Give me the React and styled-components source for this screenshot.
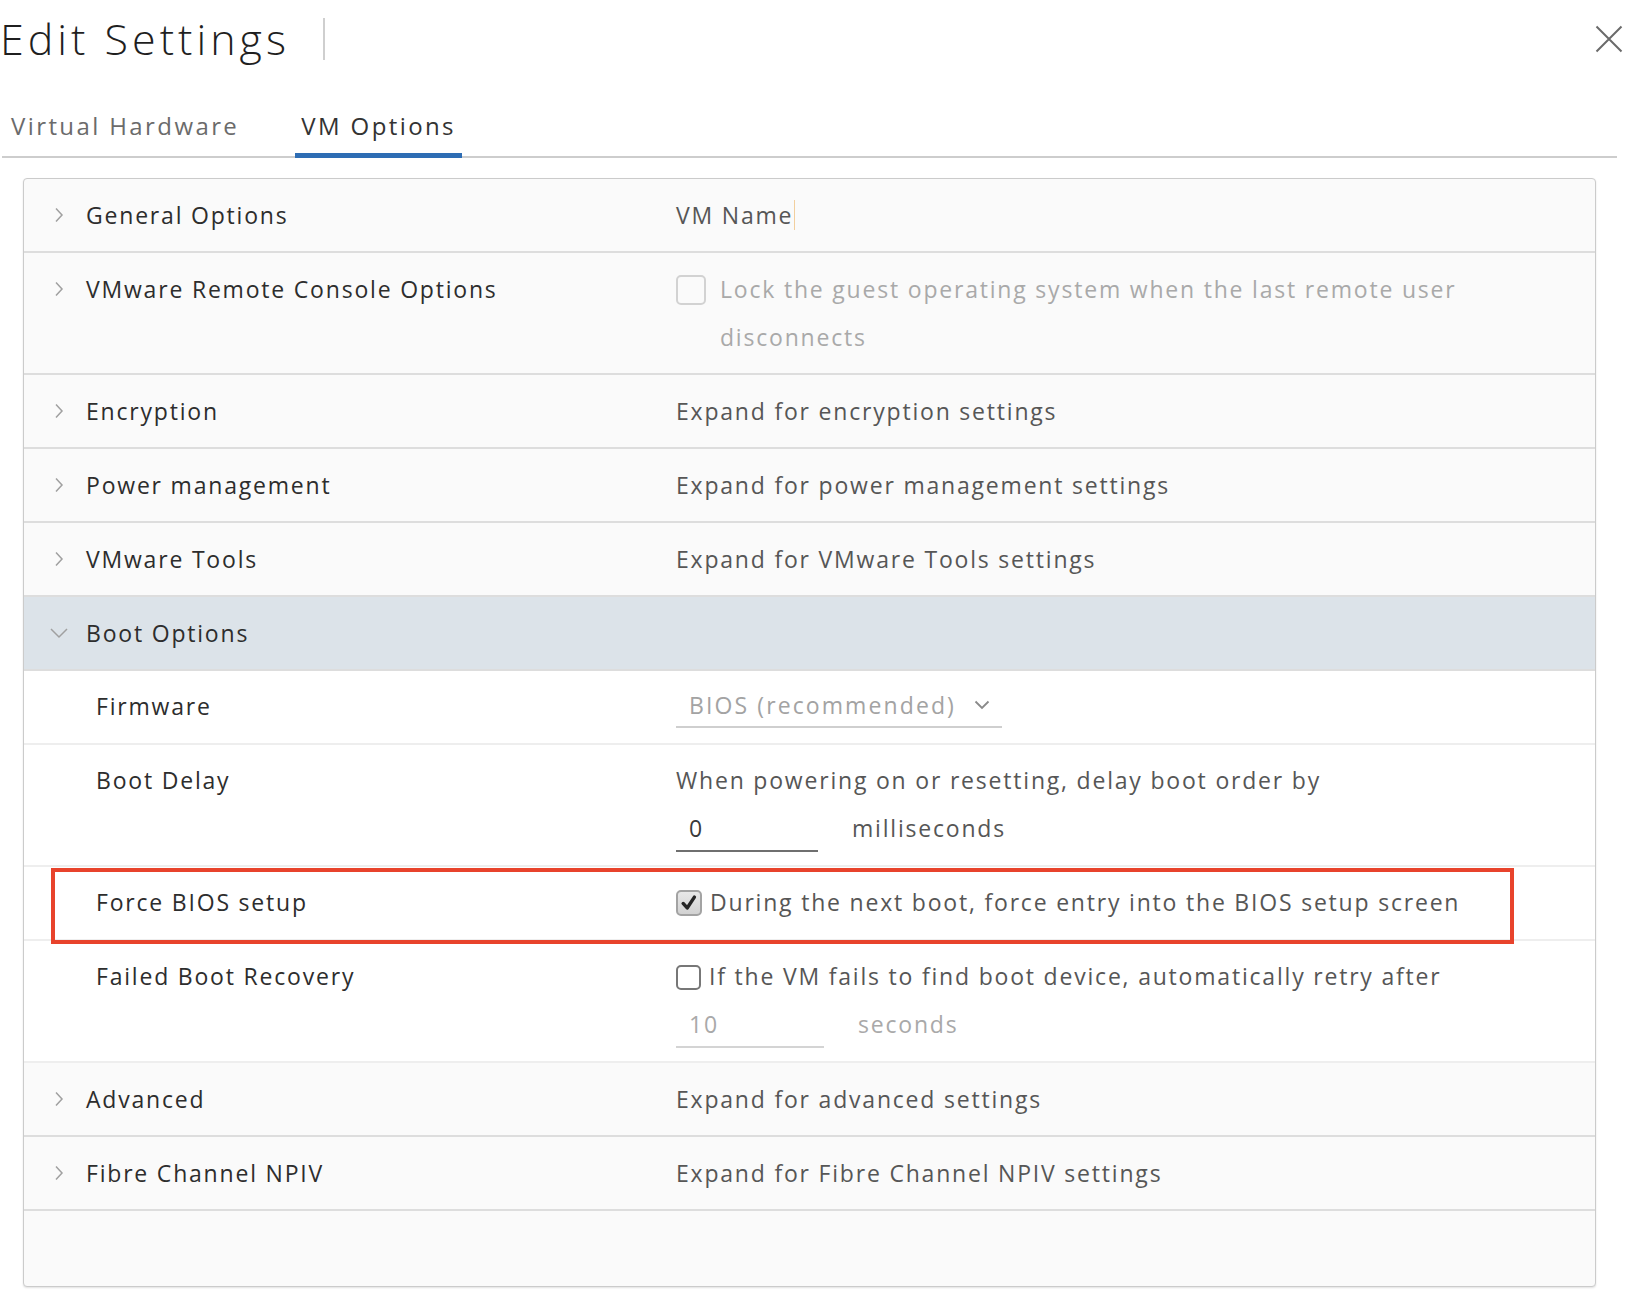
import styled, { createGlobalStyle } from 'styled-components';

const GlobalStyle = createGlobalStyle`
  html, body {
    margin: 0;
    padding: 0;
    background: #fff;
  }
  body {
    font-family: 'Open Sans', 'Liberation Sans', sans-serif;
    color: #2d2d2d;
  }
`;

function ChevronRight() {
  return (
    <Chevron viewBox="0 0 18 18">
      <polyline points="6,2.5 12,9 6,15.5" />
    </Chevron>
  );
}

function ChevronDown() {
  return (
    <Chevron viewBox="0 0 18 18">
      <polyline points="1,5 9,13 17,5" />
    </Chevron>
  );
}

function Checkbox({ checked, disabled, size }) {
  return (
    <Box $checked={checked} $disabled={disabled} $size={size}>
      {checked && (
        <svg viewBox="0 0 20 20" width="18" height="18">
          <path d="M3.5 10.5 L8 15.5 L16 3.5" fill="none" stroke="#262626" strokeWidth="3.8" strokeLinecap="round" strokeLinejoin="round" />
        </svg>
      )}
    </Box>
  );
}

function Section({ label, children }) {
  return (
    <Row>
      <LabelCell>
        <ChevronRight />
        <span>{label}</span>
      </LabelCell>
      <ValueCell>{children}</ValueCell>
    </Row>
  );
}

export default function App() {
  return (
    <>
      <GlobalStyle />
      <Dialog>
        <Header>
          <Title>Edit Settings</Title>
          <TitleDivider />
          <CloseButton aria-label="Close">
            <svg viewBox="0 0 28 28" width="28" height="28">
              <path d="M1.5 1.5 L26.5 26.5 M26.5 1.5 L1.5 26.5" stroke="#6a6a6a" strokeWidth="2" fill="none" />
            </svg>
          </CloseButton>
        </Header>

        <TabBar>
          <Tab>Virtual Hardware</Tab>
          <Tab $active>VM Options</Tab>
        </TabBar>

        <Panel>
          <Section label="General Options">
            <Value>VM Name<Caret /></Value>
          </Section>
          <Section label="VMware Remote Console Options">
            <CheckLine $gap={14}>
              <Checkbox disabled size={30} />
              <CheckText $disabled $wrap>Lock the guest operating system when the last remote user disconnects</CheckText>
            </CheckLine>
          </Section>
          <Section label="Encryption">
            <Value>Expand for encryption settings</Value>
          </Section>
          <Section label="Power management">
            <Value>Expand for power management settings</Value>
          </Section>
          <Section label="VMware Tools">
            <Value>Expand for VMware Tools settings</Value>
          </Section>

          <Row $open>
            <LabelCell>
              <ChevronDown />
              <span>Boot Options</span>
            </LabelCell>
            <ValueCell />
          </Row>

          <Row $sub>
            <LabelCell $sub>Firmware</LabelCell>
            <ValueCell>
              <SelectBox>
                BIOS (recommended)
                <SelectArrow viewBox="0 0 16 10">
                  <polyline points="1.5,1.5 8,8 14.5,1.5" />
                </SelectArrow>
              </SelectBox>
            </ValueCell>
          </Row>

          <Row $sub>
            <LabelCell $sub>Boot Delay</LabelCell>
            <ValueCell>
              <Value>When powering on or resetting, delay boot order by</Value>
              <FieldLine>
                <NumberField $width={142}>0</NumberField>
                <Unit>milliseconds</Unit>
              </FieldLine>
            </ValueCell>
          </Row>

          <Row $sub>
            <LabelCell $sub>Force BIOS setup</LabelCell>
            <ValueCell>
              <CheckLine $gap={8}>
                <Checkbox checked size={26} />
                <CheckText>During the next boot, force entry into the BIOS setup screen</CheckText>
              </CheckLine>
            </ValueCell>
            <Annotation />
          </Row>

          <Row $sub>
            <LabelCell $sub>Failed Boot Recovery</LabelCell>
            <ValueCell>
              <CheckLine $gap={8}>
                <Checkbox size={25} />
                <CheckText>If the VM fails to find boot device, automatically retry after</CheckText>
              </CheckLine>
              <FieldLine>
                <NumberField $width={148} $disabled>10</NumberField>
                <Unit $disabled>seconds</Unit>
              </FieldLine>
            </ValueCell>
          </Row>

          <Section label="Advanced">
            <Value>Expand for advanced settings</Value>
          </Section>
          <Section label="Fibre Channel NPIV">
            <Value>Expand for Fibre Channel NPIV settings</Value>
          </Section>

          <EmptyRow />
        </Panel>
      </Dialog>
    </>
  );
}

const Dialog = styled.div`
  width: 1636px;
  height: 1294px;
  overflow: hidden;
`;

const Header = styled.div`
  display: flex;
  align-items: center;
  width: 1623px;
  padding-top: 9px;
`;

const Title = styled.h1`
  margin: 0;
  font-size: 43px;
  font-weight: 300;
  letter-spacing: 4px;
  line-height: 60px;
  color: #1f1f1f;
`;

const TitleDivider = styled.div`
  width: 2px;
  height: 42px;
  margin-left: 33px;
  background: #cfcfcf;
`;

const CloseButton = styled.button`
  margin-left: auto;
  padding: 0;
  border: 0;
  background: none;
  width: 28px;
  height: 28px;
  display: flex;
`;

const TabBar = styled.div`
  display: flex;
  gap: 50px;
  width: 1615px;
  margin: 40px 0 0 2px;
  padding-left: 3px;
  box-sizing: border-box;
  border-bottom: 2px solid #cdcdcd;
`;

const Tab = styled.div`
  padding: 0 6px 10px;
  margin-bottom: -2px;
  font-size: 24px;
  letter-spacing: 2.4px;
  line-height: 34px;
  color: ${(p) => (p.$active ? '#333' : '#6b6b6b')};
  border-bottom: 5px solid ${(p) => (p.$active ? '#2e6db4' : 'transparent')};
`;

const Panel = styled.div`
  margin: 20px 0 0 23px;
  width: 1573px;
  box-sizing: border-box;
  border: 1px solid #cbcbcb;
  border-radius: 4px;
  background: #fafafa;
  box-shadow: 0 1px 2px rgba(0, 0, 0, 0.12);
  font-size: 23px;
  letter-spacing: 1.8px;
  line-height: 48px;
`;

const Row = styled.div`
  position: relative;
  display: grid;
  grid-template-columns: 652px 1fr;
  padding: ${(p) => (p.$sub ? '11px 0 13px' : '12px 0')};
  border-bottom: 2px solid ${(p) => (p.$sub ? '#eeeeee' : '#dddddd')};
  background: ${(p) => (p.$open ? '#dce3e9' : p.$sub ? '#ffffff' : 'transparent')};
`;

const EmptyRow = styled.div`
  height: 75px;
`;

const LabelCell = styled.div`
  display: flex;
  align-items: center;
  align-self: start;
  height: 48px;
  gap: 18px;
  padding-left: ${(p) => (p.$sub ? '72px' : '26px')};
  color: #2d2d2d;
`;

const Chevron = styled.svg`
  width: 18px;
  height: 18px;
  flex: none;
  fill: none;
  stroke: #a0a0a0;
  stroke-width: 1.5;
`;

const ValueCell = styled.div`
  display: flex;
  flex-direction: column;
  align-items: flex-start;
  color: #565656;
`;

const Value = styled.div`
  display: flex;
  align-items: center;
`;

const Caret = styled.span`
  display: inline-block;
  width: 1px;
  height: 30px;
  margin-left: 1px;
  background: #f2cf9e;
`;

const CheckLine = styled.div`
  display: flex;
  align-items: flex-start;
  gap: ${(p) => p.$gap}px;
`;

const Box = styled.span`
  flex: none;
  display: flex;
  align-items: center;
  justify-content: center;
  box-sizing: border-box;
  width: ${(p) => p.$size}px;
  height: ${(p) => p.$size}px;
  margin-top: ${(p) => (48 - p.$size) / 2 + 1}px;
  border-radius: 5px;
  border: 2px solid ${(p) => (p.$disabled ? '#d2d2d2' : p.$checked ? '#a3a3a3' : '#777')};
  background: ${(p) => (p.$checked ? 'linear-gradient(#e8e8e8, #d2d2d2)' : p.$disabled ? '#fafafa' : '#fff')};
`;

const CheckText = styled.span`
  color: ${(p) => (p.$disabled ? '#a9a9a9' : '#565656')};
  max-width: ${(p) => (p.$wrap ? '790px' : 'none')};
`;

const SelectBox = styled.div`
  display: flex;
  align-items: center;
  gap: 18px;
  width: 326px;
  height: 44px;
  margin: 2px 0;
  box-sizing: border-box;
  padding-left: 13px;
  border-bottom: 2px solid #cfcfcf;
  color: #a3a3a3;
  letter-spacing: 2.1px;
`;

const SelectArrow = styled.svg`
  width: 16px;
  height: 10px;
  fill: none;
  stroke: #8a8a8a;
  stroke-width: 1.8;
`;

const FieldLine = styled.div`
  display: flex;
  align-items: center;
  gap: 34px;
`;

const NumberField = styled.div`
  width: ${(p) => p.$width}px;
  height: 48px;
  box-sizing: border-box;
  padding-left: 13px;
  border-bottom: 2px solid ${(p) => (p.$disabled ? '#d4d4d4' : '#6f6f6f')};
  color: ${(p) => (p.$disabled ? '#a9a9a9' : '#3a3a3a')};
`;

const Unit = styled.span`
  color: ${(p) => (p.$disabled ? '#a9a9a9' : '#565656')};
`;

const Annotation = styled.div`
  position: absolute;
  z-index: 1;
  top: 1px;
  left: 27px;
  width: 1463px;
  height: 76px;
  box-sizing: border-box;
  border: 4px solid #e8432c;
  pointer-events: none;
`;
